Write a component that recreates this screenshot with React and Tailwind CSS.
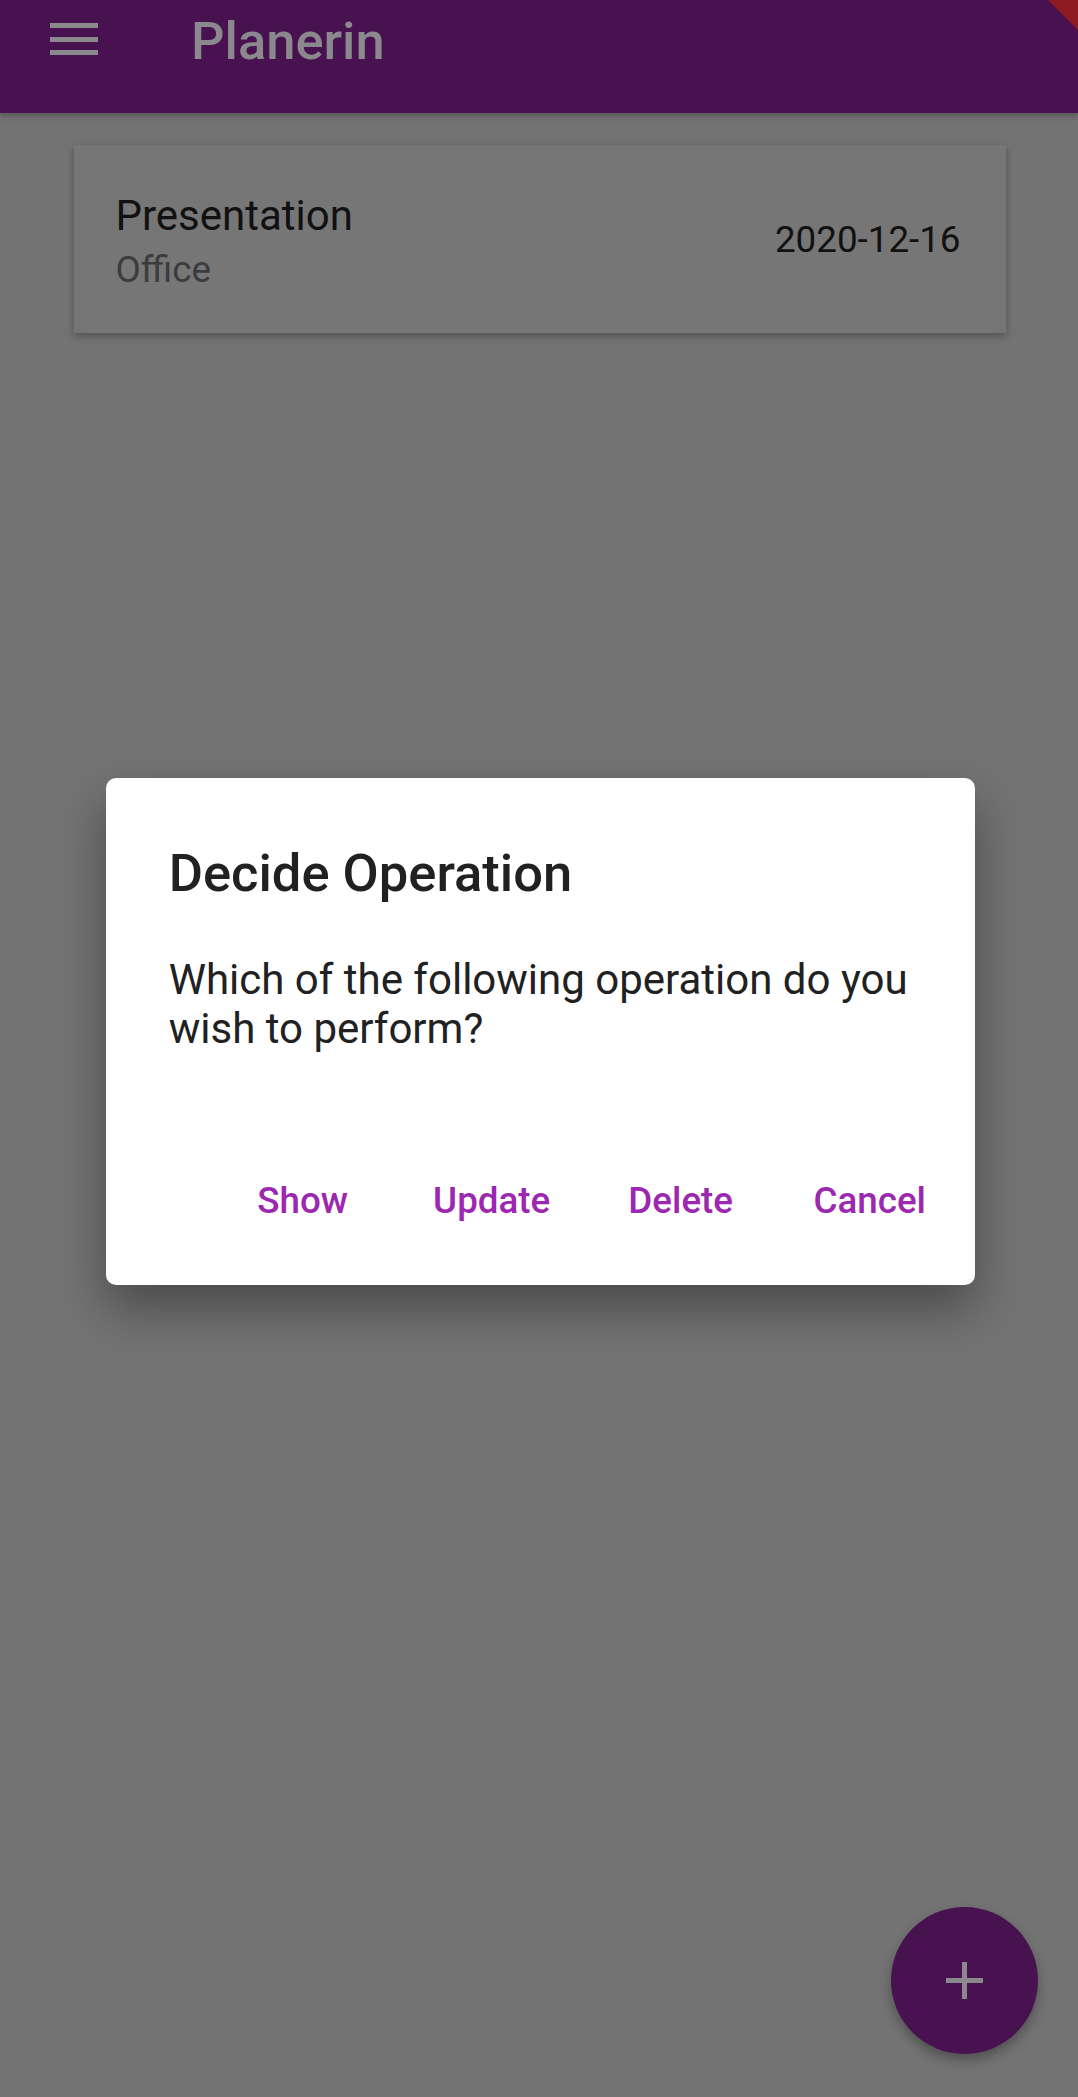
const ACTIONS = ['Show', 'Update', 'Delete', 'Cancel'];

function MenuIcon() {
  return (
    <div className="flex flex-col gap-[8.5px] w-[48px] ml-[50px] mt-[23px] self-start">
      <span className="block h-[5px] bg-[#8b888e]" />
      <span className="block h-[5px] bg-[#8b888e]" />
      <span className="block h-[5px] bg-[#8b888e]" />
    </div>
  );
}

export default function App() {
  return (
    <div className="relative w-[1078px] h-[2097px] overflow-hidden bg-[#737373] font-['Roboto','Liberation_Sans',sans-serif]">
      {/* App bar */}
      <header className="relative z-10 h-[113px] flex items-start bg-[#481251] shadow-[0_3px_6px_rgba(0,0,0,0.25)]">
        <MenuIcon />
        <h1 className="ml-[93px] mt-[11px] text-[52.5px] leading-[61.5px] font-medium text-[#8b888e]">Planerin</h1>
      </header>

      {/* Debug banner corner */}
      <svg className="absolute top-0 right-0 z-20" width="32" height="32" viewBox="0 0 32 32">
        <polygon points="2,0 32,0 32,30" fill="#8e1b22" />
      </svg>

      {/* List */}
      <div className="pt-[32px] pl-[73.5px]">
        <div className="w-[932px] h-[188px] bg-[#767676] shadow-[0_3px_8px_rgba(0,0,0,0.3)] flex items-center justify-between pl-[42px] pr-[45px]">
          <div className="flex flex-col pt-[3px]">
            <span className="text-[42px] leading-[49px] text-[#111111]">Presentation</span>
            <span className="mt-[8px] text-[36.75px] leading-[43px] text-[#3c3c3c]">Office</span>
          </div>
          <span className="text-[36.75px] leading-[43px] text-[#111111]">2020-12-16</span>
        </div>
      </div>

      {/* Dialog */}
      <div className="absolute left-[105.7px] top-[778px] w-[869px] h-[507px] bg-white rounded-[10px] shadow-[0_24px_48px_rgba(0,0,0,0.35)] flex flex-col">
        <h2 className="mt-[65px] px-[63px] text-[52.5px] leading-[61.5px] font-medium text-[#212121]">Decide Operation</h2>
        <p className="mt-[50px] px-[63px] text-[42px] leading-[49px] text-[#212121]">
          Which of the following operation do you wish to perform?
        </p>
        <div className="mt-[85px] flex justify-end gap-[21px] pr-[21px]">
          {ACTIONS.map((a) => (
            <button
              key={a}
              className="w-[168px] h-[126px] flex items-center justify-center text-[36.75px] leading-[43px] font-medium text-[#9c27b0]"
            >
              {a}
            </button>
          ))}
        </div>
      </div>

      {/* FAB */}
      <button className="absolute right-[40px] bottom-[43px] w-[147px] h-[147px] rounded-full bg-[#481251] shadow-[0_6px_12px_rgba(0,0,0,0.3)] flex items-center justify-center">
        <svg width="37" height="37" viewBox="0 0 37 37">
          <rect x="16" y="0" width="5" height="37" fill="#8b888e" />
          <rect x="0" y="16" width="37" height="5" fill="#8b888e" />
        </svg>
      </button>
    </div>
  );
}
